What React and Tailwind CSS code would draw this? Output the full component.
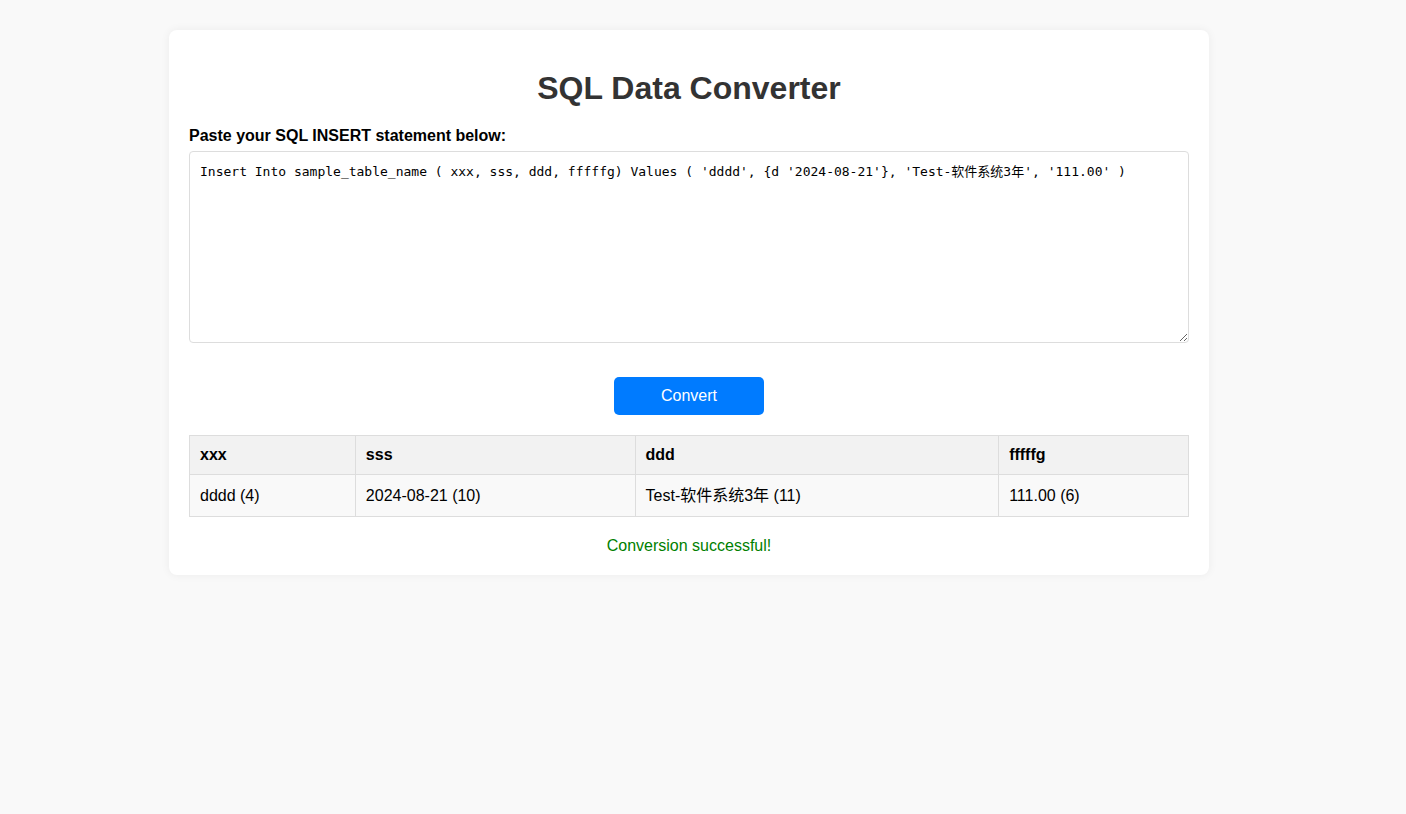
import React, { useState } from 'react';

const SQL_TEXT = "Insert Into sample_table_name ( xxx, sss, ddd, fffffg) Values ( 'dddd', {d '2024-08-21'}, 'Test-软件系统3年', '111.00' )";

const columns = [
  { name: 'xxx', value: 'dddd (4)', width: 'w-[166px]' },
  { name: 'sss', value: '2024-08-21 (10)', width: 'w-[280px]' },
  { name: 'ddd', value: 'Test-软件系统3年 (11)', width: 'w-[364px]' },
  { name: 'fffffg', value: '111.00 (6)', width: 'w-[190px]' }
];

const App = () => {
  const [sql, setSql] = useState(SQL_TEXT);

  return (
    <div className="min-h-screen bg-[#f9f9f9] pt-[30px] font-['Liberation_Sans','Noto_Sans_CJK_SC',Arial,sans-serif]">
      {/* Main card */}
      <div className="ml-[169px] w-[1040px] rounded-lg bg-white p-5 shadow-[0_0_10px_rgba(0,0,0,0.06)]">
        <h1 className="mt-5 mb-5 text-center text-[32px] font-bold leading-[normal] text-[#333]">
          SQL Data Converter
        </h1>

        <label className="mb-1.5 block text-base font-bold leading-[normal] text-black">
          Paste your SQL INSERT statement below:
        </label>
        <textarea
          value={sql}
          onChange={(e) => setSql(e.target.value)}
          spellCheck={false}
          className="block h-[192px] w-full rounded border border-[#ddd] p-2.5 font-['DejaVu_Sans_Mono','Noto_Sans_CJK_SC',monospace] text-[13px] leading-[20px] text-black outline-none"
        />

        <div className="mt-[34px] mb-5 flex justify-center">
          <button className="h-[38px] w-[150px] rounded-[5px] bg-[#007bff] text-base text-white">
            Convert
          </button>
        </div>

        {/* Result table */}
        <table className="w-full border-collapse text-left text-base text-black">
          <thead>
            <tr className="bg-[#f2f2f2]">
              {columns.map((col) => (
                <th key={col.name} className={`${col.width} border border-[#ddd] px-2.5 py-2.5 font-bold leading-[normal]`}>
                  {col.name}
                </th>
              ))}
            </tr>
          </thead>
          <tbody>
            <tr className="bg-[#f9f9f9]">
              {columns.map((col) => (
                <td key={col.name} className="h-[42px] border border-[#ddd] px-2.5 py-0 leading-[22px]">
                  {col.value}
                </td>
              ))}
            </tr>
          </tbody>
        </table>

        <p className="mt-5 text-center text-base leading-[normal] text-[#008000]">Conversion successful!</p>
      </div>
    </div>
  );
};

export default App;
